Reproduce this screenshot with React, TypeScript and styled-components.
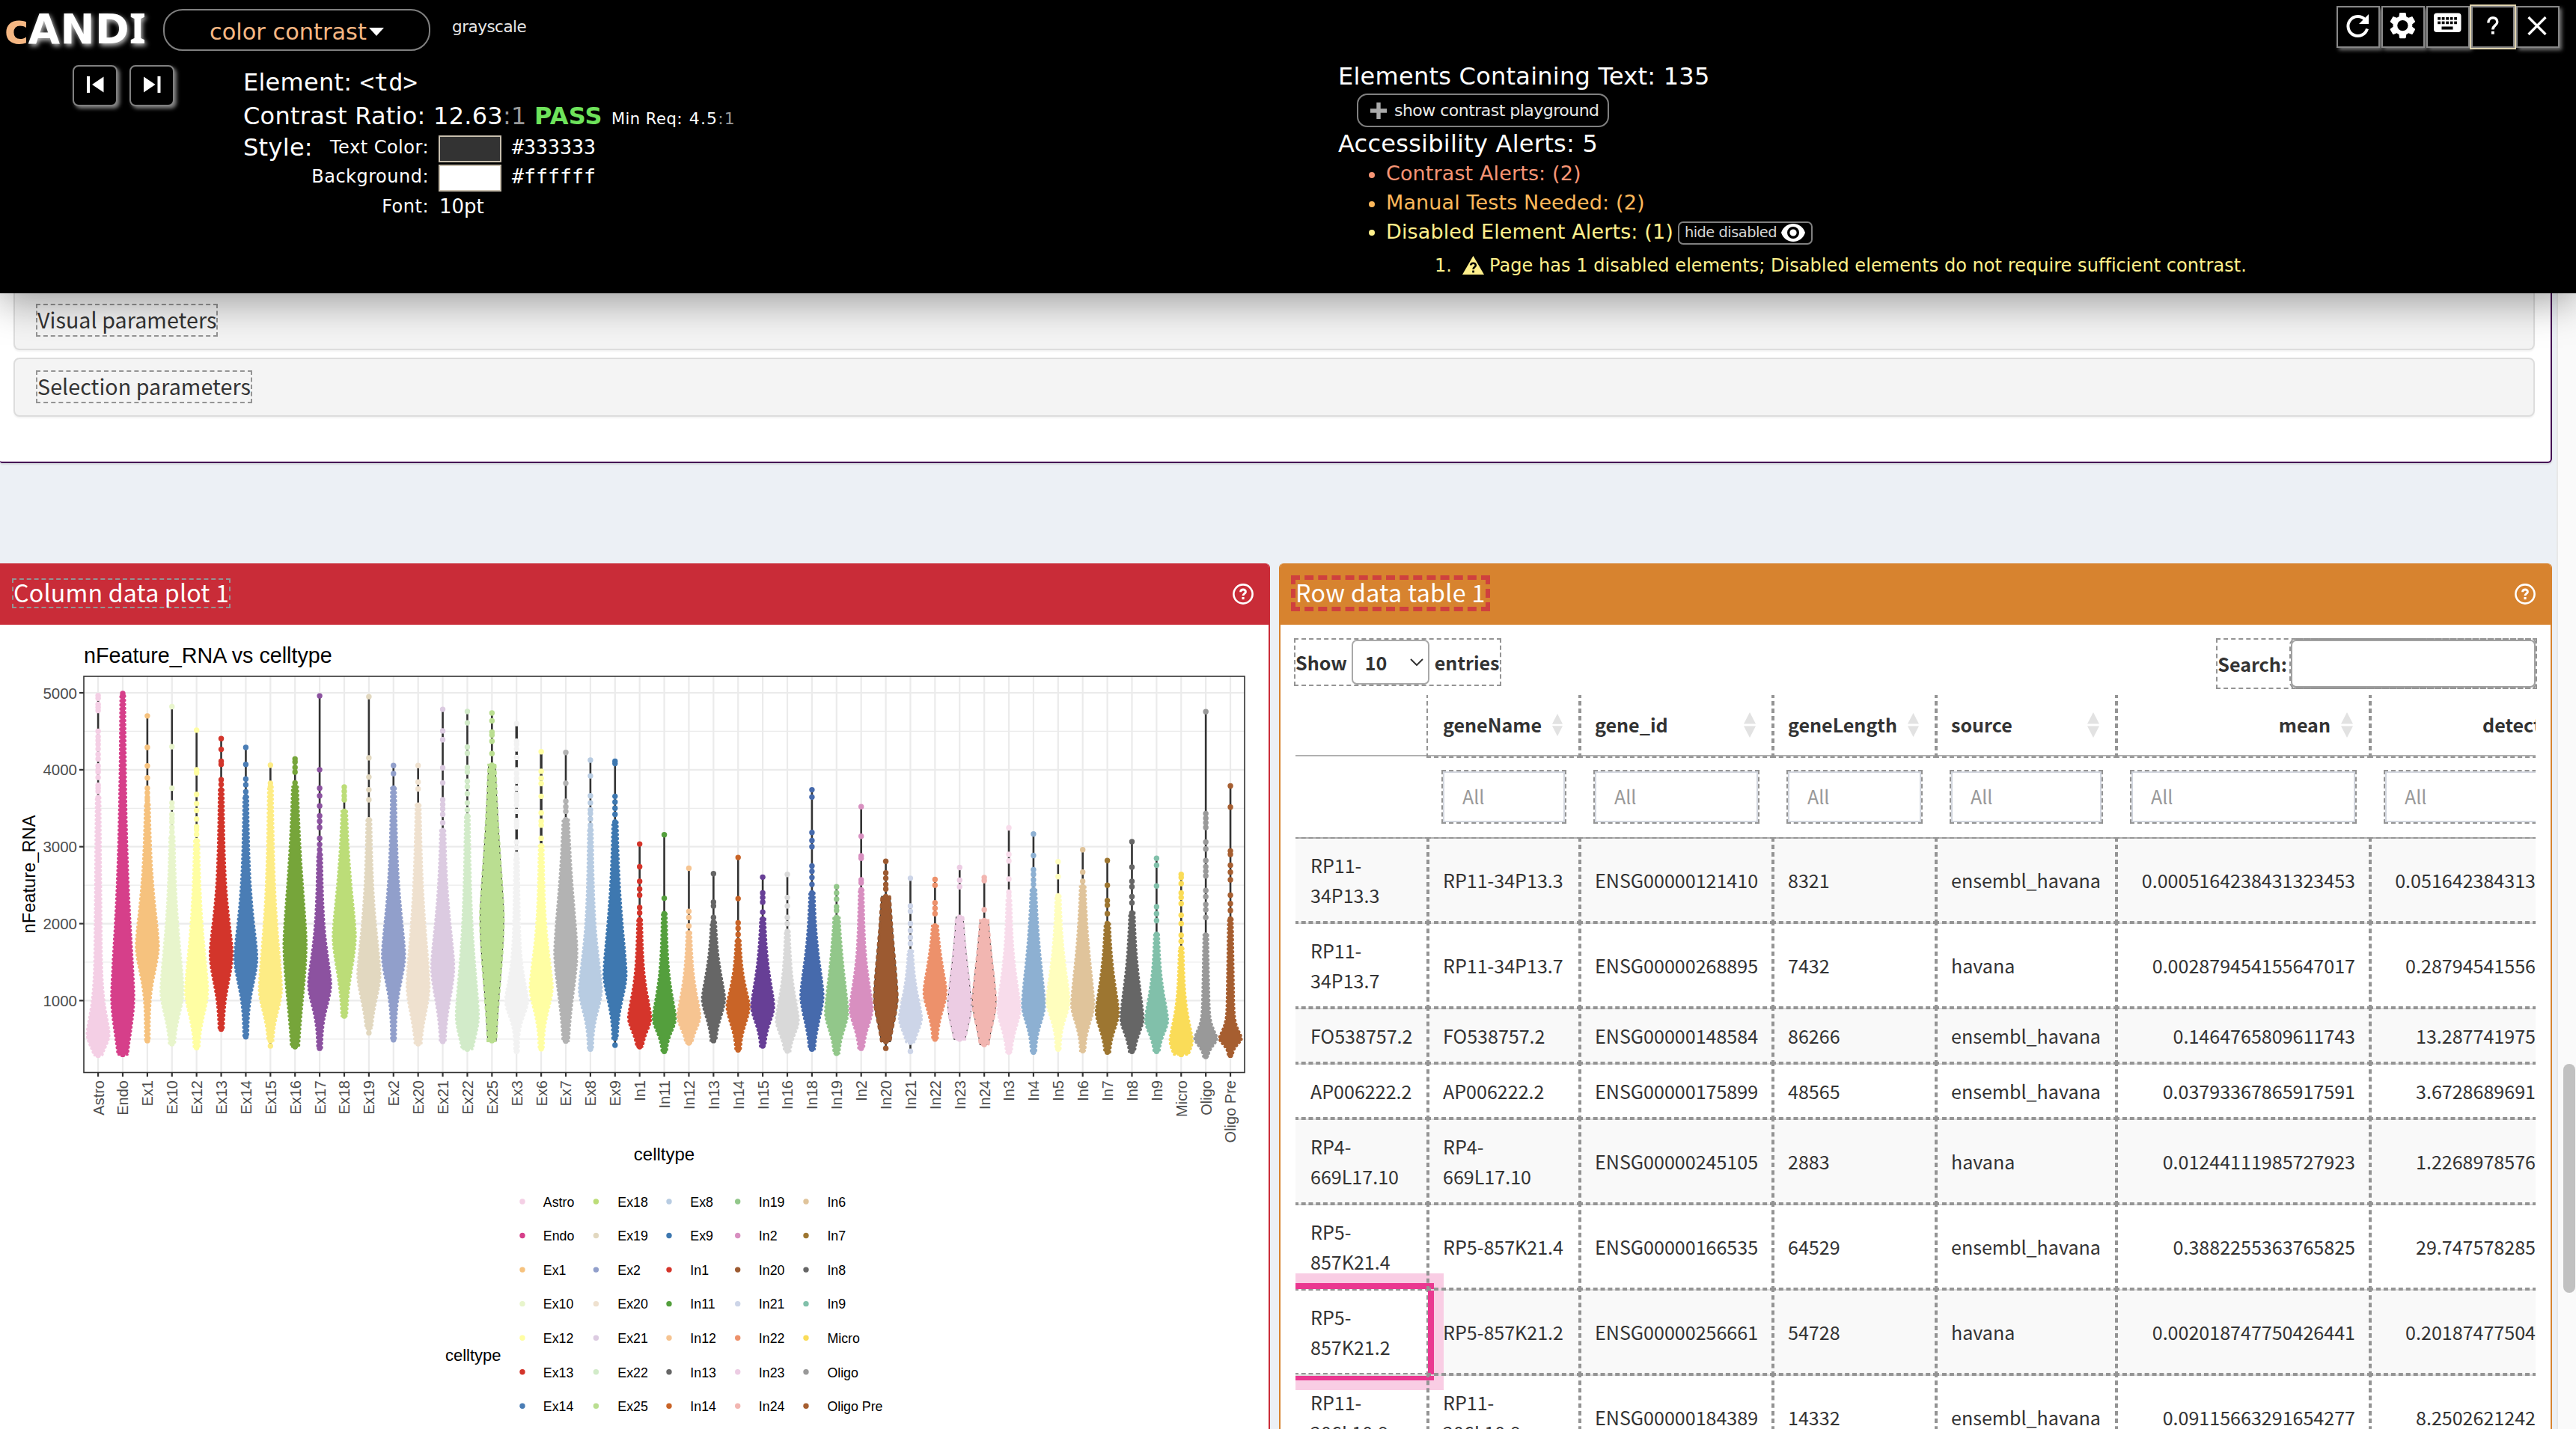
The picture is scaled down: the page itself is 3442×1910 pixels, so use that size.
import React from 'react';
import styled, { createGlobalStyle, css } from 'styled-components';

const verdana = `'DejaVu Sans', Verdana, sans-serif`;
const mono = `'DejaVu Sans Mono', monospace`;
const source = `'Noto Sans CJK SC', 'Noto Sans', sans-serif`;
const helvetica = `'Liberation Sans', Helvetica, Arial, sans-serif`;
const dashGray = '#949494';

const GlobalStyle = createGlobalStyle`
  *, *::before, *::after { box-sizing: border-box; }
  body { margin: 0; background: #ecf0f5; }
`;

const Page = styled.div`
  width: 3442px;
  height: 1910px;
  overflow: hidden;
  display: flex;
  flex-direction: column;
  background: #ecf0f5;
  font-family: ${source};
  color: #333;
`;

/* ---------- accessibility inspector bar ---------- */

const Inspector = styled.header`
  position: relative;
  z-index: 2;
  flex: none;
  height: 392px;
  background: #000;
  color: #fff;
  font-family: ${verdana};
  box-shadow: 0 12px 50px rgba(0, 0, 0, 0.36);
`;

const TopBar = styled.div`
  display: flex;
  height: 72px;
`;

const Logo = styled.div`
  width: 218px;
  padding: 3px 0 0 6px;
  font-size: 55px;
  font-weight: bold;
  line-height: 72px;
  white-space: nowrap;
`;

const LogoPrefix = styled.span`
  color: #f5b783;
  letter-spacing: -1px;
`;

const LogoName = styled.span`
  letter-spacing: 0.4px;
  text-shadow: 2px 3px 6px rgba(255, 255, 255, 0.75);
`;

const SerifCap = styled.span`
  font-family: 'Noto Sans', sans-serif;
  font-size: 56px;
  line-height: 0;
`;

const ModuleButton = styled.button`
  width: 357px;
  height: 56px;
  margin-top: 12px;
  padding: 5px 0 0 60px;
  display: flex;
  align-items: center;
  gap: 3px;
  border: 2px solid #808080;
  border-radius: 26px;
  background: #000;
  color: #f5b783;
  font: 30.4px/48px ${verdana};
  white-space: nowrap;
`;

const Grayscale = styled.span`
  margin-left: 29px;
  font-size: 21.5px;
  line-height: 72px;
  letter-spacing: -0.5px;
  color: #e8e8e8;
`;

const IconGroup = styled.div`
  display: flex;
  gap: 2px;
  margin: 8px 22px 0 auto;
`;

const IconButton = styled.button<{ $focused?: boolean }>`
  width: 58px;
  height: 56px;
  padding: 0;
  display: block;
  border: 2px solid #888;
  background: #000;
  box-shadow: 3px 3px 5px rgba(255, 255, 255, 0.45);
  ${p => p.$focused && css`
    position: relative;
    outline: 2px solid #dfd3ae;
    box-shadow: none;
  `}
  svg { display: block; }
`;

const InspectorBody = styled.div`
  display: flex;
  align-items: flex-start;
`;

const NavButtons = styled.div`
  display: flex;
  gap: 16px;
  width: 325px;
  padding: 15px 0 0 97px;
`;

const NavButton = styled.button`
  width: 60px;
  height: 55px;
  padding: 0;
  border: 2px solid #808080;
  border-radius: 8px;
  background: #000;
  box-shadow: 3px 3px 5px rgba(255, 255, 255, 0.5);
  svg { display: block; }
`;

const ElementInfo = styled.section`
  width: 1467px;
  padding-top: 15px;
`;

const InfoLine = styled.div<{ $h: number }>`
  height: ${p => p.$h}px;
  line-height: ${p => p.$h}px;
  font-size: 32px;
  letter-spacing: 0.25px;
  white-space: nowrap;
`;

const Code = styled.span`
  font-family: ${mono};
  letter-spacing: 0;
`;

const Muted = styled.span`
  color: #999;
`;

const Pass = styled.span`
  color: #6ee35b;
  font-weight: bold;
`;

const MinReq = styled.span`
  font-size: 21px;
  margin-left: 12px;
  letter-spacing: 0.5px;
`;

const MinReqValue = styled.span`
  font-size: 22px;
  letter-spacing: 1.1px;
`;

const StyleRow = styled.div`
  display: flex;
  height: 39.4px;
  line-height: 39px;
  white-space: nowrap;
`;

const StyleHead = styled.span`
  width: 92px;
  font-size: 32px;
  letter-spacing: 0.3px;
`;

const StyleLabel = styled.span`
  width: 156px;
  display: flex;
  justify-content: flex-end;
  font-size: 24px;
  letter-spacing: 0.5px;
`;

const Swatch = styled.span<{ $color: string }>`
  width: 84px;
  height: 36px;
  margin: 3px 14px 0 13px;
  border: 2px solid #c8bfae;
  background: ${p => p.$color};
`;

const HexValue = styled.span`
  font: 26.6px/38px ${mono};
`;

const FontValue = styled.span`
  margin-left: 14px;
  font-size: 26px;
`;

const Alerts = styled.section`
  padding-top: 10px;
`;

const AlertHeading = styled.div<{ $h: number }>`
  height: ${p => p.$h}px;
  line-height: ${p => p.$h}px;
  font-size: 32px;
  letter-spacing: 0.25px;
  margin-left: -4px;
`;

const PlaygroundButton = styled.button`
  display: flex;
  align-items: center;
  gap: 10px;
  width: 337px;
  height: 45px;
  margin: 3px 0 1px 21px;
  padding: 1px 0 0 16px;
  border: 2px solid #808080;
  border-radius: 14px;
  background: #000;
  color: #e8e8e8;
  font: 22px/40px ${verdana};
  letter-spacing: -0.52px;
  white-space: nowrap;
`;

const AlertList = styled.ul`
  margin: 0;
  padding: 0 0 0 37px;
  list-style: none;
`;

const AlertItem = styled.li<{ $color: string }>`
  display: flex;
  align-items: center;
  height: 38.8px;
  color: ${p => p.$color};
  font-size: 27px;
  line-height: 38px;
  letter-spacing: 0.12px;
  white-space: nowrap;
  &::before {
    content: '';
    width: 8px;
    height: 8px;
    margin: 3px 15px 0 0;
    border-radius: 50%;
    background: ${p => p.$color};
  }
`;

const HideButton = styled.button`
  display: flex;
  align-items: center;
  gap: 6px;
  width: 180px;
  height: 31px;
  margin: 3px 0 0 6px;
  padding: 0 0 0 7px;
  border: 2px solid #808080;
  border-radius: 7px;
  background: #000;
  color: #d6d6d6;
  font: 19.4px/26px ${verdana};
  letter-spacing: -0.5px;
  white-space: nowrap;
`;

const AlertDetail = styled.div`
  display: flex;
  align-items: center;
  height: 40px;
  margin: 6px 0 0 125px;
  color: #fff08c;
  font-size: 24px;
  line-height: 40px;
  letter-spacing: 0.05px;
  white-space: nowrap;
  svg { margin: 0 7px 8px 14px; align-self: flex-end; }
`;

/* ---------- application ---------- */

const Viewport = styled.div`
  flex: 1;
  display: flex;
  min-height: 0;
`;

const Content = styled.main`
  width: 3416px;
  display: flex;
  flex-direction: column;
`;

const ScrollTrack = styled.div`
  width: 26px;
  padding: 1030px 0 0 7px;
  border-left: 2px solid #e8e8e8;
  background: #fafafa;
`;

const ScrollThumb = styled.div`
  width: 16px;
  height: 306px;
  border-radius: 8px;
  background: #c1c1c1;
`;

const ParamBox = styled.section`
  flex: none;
  width: 3410px;
  height: 227px;
  padding: 0 21px 0 18px;
  border: solid #440154;
  border-width: 0 2px 2px 0;
  border-radius: 0 0 6px 3px;
  background: #fff;
  box-shadow: 0 2px 2px rgba(0, 0, 0, 0.1);
`;

const ParamPanel = styled.div<{ $cut?: boolean }>`
  height: ${p => (p.$cut ? 76 : 79)}px;
  margin-bottom: 10px;
  padding: ${p => (p.$cut ? 14 : 15)}px 0 0 28px;
  border: 2px solid #ddd;
  ${p => p.$cut && css`border-top: 0;`}
  border-radius: ${p => (p.$cut ? '0 0 8px 8px' : '8px')};
  background: #f4f4f4;
  box-shadow: 0 2px 2px rgba(0, 0, 0, 0.05);
`;

const ParamLabel = styled.span`
  display: inline-block;
  padding-bottom: 2px;
  border: 2px dashed ${dashGray};
  font-size: 28.65px;
  line-height: 38px;
  letter-spacing: 0.06px;
  vertical-align: top;
`;

const Boxes = styled.div`
  flex: 1;
  display: flex;
  gap: 12px;
  padding-top: 134px;
  min-height: 0;
`;

const Box = styled.section<{ $accent: string; $width: number; $first?: boolean }>`
  width: ${p => p.$width}px;
  display: flex;
  flex-direction: column;
  border: solid ${p => p.$accent};
  border-width: 0 2px 0 ${p => (p.$first ? 0 : 2)}px;
  border-radius: ${p => (p.$first ? '0 6px 0 0' : '6px 6px 0 0')};
  background: #fff;
  overflow: hidden;
`;

const BoxHeader = styled.div<{ $accent: string; $pad: string }>`
  flex: none;
  display: flex;
  justify-content: space-between;
  align-items: flex-start;
  height: 82px;
  padding: ${p => p.$pad};
  background: ${p => p.$accent};
`;

const BoxTitle = styled.span<{ $alert?: boolean }>`
  padding-bottom: 4px;
  border: ${p => (p.$alert ? '6px dashed #cf403e' : `2px dashed ${dashGray}`)};
  color: #fff;
  font-size: 32.2px;
  line-height: 32px;
  letter-spacing: ${p => (p.$alert ? 0.35 : 0.18)}px;
  white-space: nowrap;
`;

const HelpIcon = styled.svg<{ $top: number }>`
  margin-top: ${p => p.$top}px;
`;

const TableTools = styled.div`
  flex: none;
  display: flex;
  justify-content: space-between;
  align-items: flex-start;
  height: 94px;
  padding: 18px 18px 0;
  font-size: 25.07px;
  font-weight: bold;
`;

const LengthLabel = styled.label`
  display: flex;
  align-items: center;
  height: 64px;
  border: 2px dashed ${dashGray};
  line-height: 58px;
`;

const LabelText = styled.span`
  padding-bottom: 1px;
`;

const LengthSelect = styled.span`
  display: flex;
  align-items: center;
  justify-content: space-between;
  width: 104px;
  height: 60px;
  margin: 0 7px 0 6px;
  padding: 0 6px 1px 16px;
  border: 2px solid #a9a9a9;
  border-radius: 7px;
`;

const SearchLabel = styled.label`
  display: flex;
  align-items: center;
  height: 68px;
  border: 2px dashed ${dashGray};
`;

const SearchInput = styled.input`
  width: 327px;
  height: 64px;
  margin-left: 5px;
  border: 2px solid #a0a0a0;
  border-radius: 7px;
  outline: 2px dashed ${dashGray};
  background: #fff;
`;

const TableClip = styled.div`
  flex: 1;
  width: 1657px;
  margin-left: 20px;
  min-height: 0;
  overflow: hidden;
`;

const Table = styled.table`
  width: 1657px;
  table-layout: fixed;
  border-collapse: separate;
  border-spacing: 0;
  font-size: 25.07px;
  line-height: 40px;
`;

const HeadCell = styled.th<{ $blank?: boolean }>`
  height: 82px;
  padding: 0 20px;
  border-bottom: 2px solid #b0b0b0;
  ${p => !p.$blank && css`outline: 2px dashed ${dashGray};`}
  white-space: nowrap;
`;

const HeadInner = styled.div<{ $numeric?: boolean }>`
  display: flex;
  align-items: center;
  justify-content: ${p => (p.$numeric ? 'flex-end' : 'space-between')};
  gap: 14px;
  margin-right: 3px;
`;

const HeadText = styled.span`
  padding-bottom: 3px;
`;

const CutHead = styled.div`
  padding: 0 0 3px 130px;
  text-align: left;
`;

const FilterCell = styled.td`
  height: 110px;
  padding: 20px;
  border-bottom: 2px solid #b0b0b0;
`;

const FilterInput = styled.input<{ $cut?: boolean }>`
  display: block;
  width: ${p => (p.$cut ? '260px' : '100%')};
  height: 68px;
  padding: 0 0 2px 24px;
  border: 2px solid #d2d6de;
  border-radius: 0;
  outline: 2px dashed ${dashGray};
  font: 25.07px ${source};
  &::placeholder { color: #999; opacity: 1; }
`;

const BodyRow = styled.tr`
  &:nth-child(odd) { background: #f9f9f9; }
`;

const Cell = styled.td<{ $first?: boolean; $numeric?: boolean; $active?: boolean; $cut?: boolean }>`
  padding: ${p => (p.$cut ? '15px 0 17px 20px' : '15px 20px 17px')};
  border-top: ${p => (p.$first ? '0' : '2px solid #ddd')};
  outline: 2px dashed ${dashGray};
  text-align: ${p => (p.$numeric ? 'right' : 'left')};
  vertical-align: middle;
  white-space: pre-line;
  ${p => p.$numeric && css`white-space: nowrap;`}
  ${p => p.$active && css`
    background: #fff;
    outline: none;
    border-top-color: transparent;
    box-shadow: 0 0 0 8px #ea3790, 0 0 0 21px #f9cde4;
  `}
`;

const ChartSvg = styled.svg`
  display: block;
  font-family: ${helvetica};
`;

/* ---------- violin data ---------- */

type Violin = {
  name: string;
  color: string;
  dots: number[];
  col: number;
  peak: number;
  low: number;
  up: number;
  down: number;
};

const v = (
  name: string, color: string, dots: number[], col: number,
  peak: number, low: number, up: number, down: number,
): Violin => ({ name, color, dots, col, peak, low, up, down });

const violins: Violin[] = [
  v('Astro', '#f4cfe5', [4965, 4930, 4850, 4810, 4770, 4500, 4430, 4380, 4330, 4270, 4200, 4140, 4050, 4000, 3970, 3900, 3800, 3760, 3720], 3640, 560, 290, 400, 220),
  v('Endo', '#d63f8a', [4990], 4960, 1050, 300, 1350, 700),
  v('Ex1', '#f6c27e', [4700, 4290, 4050, 3895, 3760, 3700, 3640, 3600], 3550, 1720, 480, 750, 480),
  v('Ex10', '#e8f5cc', [4820, 4300, 3760, 3570, 3510, 3420, 3370, 3320, 3250, 3190], 3130, 1130, 440, 900, 430),
  v('Ex12', '#fffea3', [4515, 4000, 3960, 3680, 3560, 3470, 3360, 3260, 3220, 3160], 3080, 1130, 390, 850, 430),
  v('Ex13', '#d3352b', [4405, 4265, 4110, 4070, 3870, 3810], 3740, 1620, 630, 650, 520),
  v('Ex14', '#4a7db5', [4290, 4070, 3880, 3805, 3715], 3650, 1560, 530, 700, 480),
  v('Ex15', '#fdec85', [4060, 3825, 410], 3780, 1150, 480, 950, 400),
  v('Ex16', '#76a53a', [4140, 4100, 4030, 3970, 3830], 3780, 1750, 400, 1150, 1050),
  v('Ex17', '#8c52a0', [4960, 4000, 3760, 3660, 3530, 3400, 3330, 3250, 3110, 3030, 2960], 2900, 1220, 380, 560, 400),
  v('Ex18', '#bcdd78', [3775, 3720, 3660, 3610], 3460, 1850, 800, 850, 620),
  v('Ex19', '#e2d8c0', [4950, 4155, 3905, 3740, 3610, 580], 3350, 1350, 640, 780, 470),
  v('Ex2', '#919fcb', [4055, 3950], 3760, 1600, 490, 800, 500),
  v('Ex20', '#efe1cf', [4055, 3840, 3750], 3540, 1200, 440, 1000, 520),
  v('Ex21', '#dccbe1', [4785, 4505, 4390, 4025, 3830, 3610, 3550, 3490, 3420, 3310], 3210, 1450, 470, 800, 580),
  v('Ex22', '#d2ebc9', [4757, 4610, 4295, 4215, 4030, 3970, 3850, 3780, 3690, 3570, 3480], 3400, 800, 370, 950, 420),
  v('Ex25', '#bade91', [4738, 4635, 4490, 4450, 4370, 4210], 4060, 2100, 480, 1250, 1250),
  v('Ex3', '#f2f2f2', [4600, 4370, 4330, 4270, 4160, 4000, 3950, 3890, 3850, 3760, 3680, 3640, 3600, 3540, 3460, 3340, 3300, 3260, 3060, 2990, 2900], 2850, 1000, 340, 400, 270),
  v('Ex6', '#fffea3', [4235, 3980, 3890, 3820, 3655, 3440, 3330, 3280, 3110], 3010, 1180, 375, 620, 400),
  v('Ex7', '#b3b3b3', [4225, 3825, 3590, 3520, 3460], 3350, 1650, 475, 1050, 780),
  v('Ex8', '#b8cce2', [4125, 3920, 3660, 3570, 3480, 3430, 3360, 3280], 3220, 1150, 370, 650, 390),
  v('Ex9', '#3e78b0', [4110, 4080, 3655, 3580, 3500, 3420, 420], 3320, 1350, 510, 900, 450),
  v('In1', '#d5352b', [3035, 2740, 2550, 2450, 2370, 2210, 2140], 2050, 780, 400, 420, 250),
  v('In11', '#549f3d', [3155, 2330], 2130, 770, 340, 450, 240),
  v('In12', '#f6c491', [2720, 2160, 2080, 1970], 1880, 800, 450, 420, 240),
  v('In13', '#666666', [2650, 2280, 2230, 2080], 2020, 1030, 480, 450, 330),
  v('In14', '#c96427', [2860, 2325, 2010, 1940, 1860], 1780, 930, 360, 350, 320),
  v('In15', '#673f96', [2605, 2400, 2340, 2280, 2150], 2060, 930, 410, 500, 290),
  v('In16', '#d9d9d9', [2640, 2340, 2230, 2080, 2000], 1900, 750, 345, 450, 260),
  v('In18', '#466aac', [3740, 3645, 3185, 3080, 3000, 2750, 2680, 2600, 2510], 2400, 1080, 370, 600, 450),
  v('In19', '#92c78a', [2480, 2400, 2320, 2220, 2170], 2080, 850, 315, 750, 320),
  v('In2', '#d88fc0', [3520, 3135, 2880, 2850, 2570, 2530], 2440, 900, 380, 500, 310),
  v('In20', '#9c5a31', [2810, 2660, 2590, 2510, 2450, 380], 2350, 1050, 470, 1050, 480),
  v('In21', '#cdd5e8', [2590, 2230, 2160, 2000, 1910, 1820, 1740, 340], 1640, 780, 460, 400, 260),
  v('In22', '#ed916b', [2575, 2500, 2270, 2200, 2130], 1970, 1120, 500, 500, 350),
  v('In23', '#eccce3', [2730, 2565, 2480], 2080, 950, 500, 750, 430),
  v('In24', '#f2b6b1', [2600, 2560, 2180], 2040, 1000, 430, 800, 450),
  v('In3', '#f8dceb', [3245, 2900, 2815, 2580, 2410, 2360], 2300, 900, 330, 550, 340),
  v('In4', '#8db0d2', [3165, 2885, 2700, 2640, 2570, 2510], 2440, 950, 330, 800, 330),
  v('In5', '#fffebe', [2805, 2610], 2360, 1000, 370, 600, 310),
  v('In6', '#e0c49b', [2960, 2670, 2550], 2480, 950, 350, 800, 320),
  v('In7', '#9d7631', [2820, 2500, 2300, 2240, 2130], 2000, 850, 330, 550, 310),
  v('In8', '#666666', [3065, 2735, 2550, 2480, 2350, 2270], 2140, 770, 340, 650, 270),
  v('In9', '#81c0aa', [2850, 2760, 2490, 2220, 2130, 2040], 1860, 750, 340, 450, 250),
  v('Micro', '#fadc58', [2640, 2600, 2520, 2400, 2340, 2260, 2110, 2000, 1850, 1770], 1680, 480, 300, 380, 240),
  v('Oligo', '#999999', [4755, 3430, 3370, 3310, 3250, 3060, 2970, 2820, 2740, 2680, 2620, 2430, 2350, 2250, 2180, 2080], 1850, 510, 275, 160, 130),
  v('Oligo Pre', '#a65e30', [3790, 3515, 2945, 2900, 2760, 2670, 2570, 2370, 2260, 2170], 2060, 510, 290, 150, 110),
];

/* Sparse categories, where the violin's dark edge shows between the points. */
const sparse = new Set(['In20', 'In23', 'In24', 'Ex25']);

/* The chart's own coordinates start at the box body, 835px below the page top. */
const TOP = 835;
const yOf = (value: number) => 926 - TOP + (5000 - value) * 0.10285;
const xOf = (i: number) => 131.1 + i * 32.89;
const NECK = 3.8;
const HALF = 16.2;

const halfWidth = (d: Violin, value: number) => {
  const above = value > d.peak;
  const t = Math.abs(value - d.peak) / (above ? d.up : d.down);
  const bell = Math.exp(-Math.pow(t, above ? 1.5 : 1.9));
  const taper = above ? Math.max(0, 1 - (value - d.peak) / (d.col - d.peak)) : bell;
  return NECK + (HALF - NECK) * (0.78 * bell + 0.22 * taper);
};

const outline = (d: Violin, cx: number) => {
  const n = 60;
  const right: string[] = [];
  const left: string[] = [];
  for (let k = 0; k <= n; k++) {
    const value = d.col - ((d.col - d.low) * k) / n;
    const w = halfWidth(d, value) - 1;
    right.push(`${(cx + w).toFixed(1)} ${yOf(value).toFixed(1)}`);
    left.unshift(`${(cx - w).toFixed(1)} ${yOf(value).toFixed(1)}`);
  }
  return `M${right.concat(left).join('L')}Z`;
};

const legendColumns = [
  { dot: 698, text: 726, from: 0 },
  { dot: 796.4, text: 825.5, from: 10 },
  { dot: 894, text: 922.5, from: 20 },
  { dot: 985.7, text: 1014, from: 30 },
  { dot: 1077, text: 1105.6, from: 40 },
];

const ViolinChart = () => (
  <ChartSvg width="1694" height="1075" viewBox="0 0 1694 1075">
    <text x="112" y={886 - TOP} fontSize="28.7">nFeature_RNA vs celltype</text>
    {[500, 1500, 2500, 3500, 4500].map(t => (
      <path key={t} d={`M112 ${yOf(t)}H1663`} stroke="#ebebeb" strokeWidth="1.2" />
    ))}
    {[1000, 2000, 3000, 4000, 5000].map(t => (
      <g key={t}>
        <path d={`M112 ${yOf(t)}H1663`} stroke="#ebebeb" strokeWidth="2.2" />
        <path d={`M106 ${yOf(t)}H112`} stroke="#333" strokeWidth="2.2" />
        <text x="103" y={yOf(t) + 7.5} fontSize="20.5" textAnchor="end" fill="#4d4d4d">{t}</text>
      </g>
    ))}
    {violins.map((d, i) => (
      <path key={d.name} d={`M${xOf(i)} 69V598`} stroke="#ebebeb" strokeWidth="2.2" />
    ))}
    {violins.map((d, i) => (
      <g key={d.name}>
        <path d={`M${xOf(i)} ${yOf(d.dots[0])}V${yOf(Math.min(d.low, ...d.dots))}`} stroke="#333" strokeWidth={d.name === 'Ex3' || d.name === 'Ex6' ? 3.4 : 2.6} />
        {sparse.has(d.name) && <path d={outline(d, xOf(i))} fill="none" stroke="#333" strokeWidth="2" />}
        <path d={outline(d, xOf(i))} fill={d.color} />
        <path d={outline(d, xOf(i))} fill="none" stroke={d.color} strokeWidth={sparse.has(d.name) ? 4 : 3.2} strokeLinecap="round" strokeDasharray={sparse.has(d.name) ? '3 5.6' : '1 4.4'} />
        {[...d.dots, d.col, d.low].map((p, k) => (
          <circle key={k} cx={xOf(i)} cy={yOf(p)} r="3.7" fill={d.color} />
        ))}
        <path d={`M${xOf(i)} 598v6`} stroke="#333" strokeWidth="2.2" />
        <text transform={`translate(${xOf(i) + 7.4} 609) rotate(-90)`} fontSize="20" textAnchor="end" fill="#4d4d4d">{d.name}</text>
      </g>
    ))}
    <rect x="112" y="69" width="1551" height="529.5" fill="none" stroke="#333" strokeWidth="1.6" />
    <text transform={`translate(46.8 ${1168.5 - TOP}) rotate(-90)`} fontSize="23.7" textAnchor="middle">nFeature_RNA</text>
    <text x="887.5" y={1551 - TOP} fontSize="24" textAnchor="middle">celltype</text>
    <text x="595" y={1819 - TOP} fontSize="22">celltype</text>
    {legendColumns.map(c =>
      violins.slice(c.from, c.from + 7).map((d, r) => (
        <g key={d.name}>
          <circle cx={c.dot} cy={1606 - TOP + r * 45.55} r="3.7" fill={d.color} />
          <text x={c.text - 0.2} y={1612.8 - TOP + r * 45.55} fontSize="17.8">{d.name}</text>
        </g>
      )),
    )}
  </ChartSvg>
);

/* ---------- table data ---------- */

const columnWidths = [177, 203, 258, 218, 241, 339, 221];

const rows = [
  ['RP11-\n34P13.3', 'RP11-34P13.3', 'ENSG00000121410', '8321', 'ensembl_havana', '0.0005164238431323453', '0.051642384313'],
  ['RP11-\n34P13.7', 'RP11-34P13.7', 'ENSG00000268895', '7432', 'havana', '0.002879454155647017', '0.28794541556'],
  ['FO538757.2', 'FO538757.2', 'ENSG00000148584', '86266', 'ensembl_havana', '0.1464765809611743', '13.287741975'],
  ['AP006222.2', 'AP006222.2', 'ENSG00000175899', '48565', 'ensembl_havana', '0.03793367865917591', '3.6728689691'],
  ['RP4-\n669L17.10', 'RP4-\n669L17.10', 'ENSG00000245105', '2883', 'havana', '0.01244111985727923', '1.2268978576'],
  ['RP5-\n857K21.4', 'RP5-857K21.4', 'ENSG00000166535', '64529', 'ensembl_havana', '0.3882255363765825', '29.747578285'],
  ['RP5-\n857K21.2', 'RP5-857K21.2', 'ENSG00000256661', '54728', 'havana', '0.002018747750426441', '0.20187477504'],
  ['RP11-\n206L10.9', 'RP11-\n206L10.9', 'ENSG00000184389', '14332', 'ensembl_havana', '0.09115663291654277', '8.2502621242'],
];

const SortIcon = () => (
  <svg width="16" height="34" viewBox="0 0 16 34" fill="#e2e2e2">
    <path d="M8 0L16 15.5H0ZM8 34L16 18.5H0Z" />
  </svg>
);

const Help = ({ top }: { top: number }) => (
  <HelpIcon $top={top} width="28" height="28" viewBox="0 0 28 28" fill="none" stroke="#fff">
    <circle cx="14" cy="14" r="12.6" strokeWidth="2.6" />
    <path d="M10.6 11.2C10.8 6.9 17.6 7 17.4 11.1C17.3 13.4 14 13.4 14 16.2" strokeWidth="3" />
    <path d="M14 18v3.2" strokeWidth="3.2" />
  </HelpIcon>
);

const red = '#c92c38';
const orange = '#d7832f';

export default function App() {
  return (
    <Page>
      <GlobalStyle />
      <Inspector>
        <TopBar>
          <Logo>
            <LogoPrefix>c</LogoPrefix>
            <LogoName>AND<SerifCap>I</SerifCap></LogoName>
          </Logo>
          <ModuleButton>
            color contrast
            <svg width="20" height="11" viewBox="0 0 20 11"><path d="M0 0H20L10 11Z" fill="#fff" /></svg>
          </ModuleButton>
          <Grayscale>grayscale</Grayscale>
          <IconGroup>
            <IconButton aria-label="relaunch">
              <svg width="54" height="52" viewBox="0 0 54 52">
                <path d="M36.2 16.4A13 13 0 1 0 39 28.5" fill="none" stroke="#fff" strokeWidth="4" />
                <path d="M41 9V22H28Z" fill="#fff" />
              </svg>
            </IconButton>
            <IconButton aria-label="settings">
              <svg width="54" height="52" viewBox="0 0 54 52">
                <g transform="translate(4.9 2.6) scale(1.79)">
                  <path fill="#fff" d="M19.14 12.94c.04-.3.06-.61.06-.94 0-.32-.02-.64-.07-.94l2.03-1.58c.18-.14.23-.41.12-.61l-1.92-3.32c-.12-.22-.37-.29-.59-.22l-2.39.96c-.5-.38-1.03-.7-1.62-.94L14.4 2.81c-.04-.24-.24-.41-.48-.41h-3.84c-.24 0-.43.17-.47.41l-.36 2.54c-.59.24-1.13.57-1.62.94l-2.39-.96c-.22-.08-.47 0-.59.22L2.74 8.87c-.12.21-.08.47.12.61l2.03 1.58c-.05.3-.09.63-.09.94s.02.64.07.94l-2.03 1.58c-.18.14-.23.41-.12.61l1.92 3.32c.12.22.37.29.59.22l2.39-.96c.5.38 1.03.7 1.62.94l.36 2.54c.05.24.24.41.48.41h3.84c.24 0 .44-.17.47-.41l.36-2.54c.59-.24 1.13-.56 1.62-.94l2.39.96c.22.08.47 0 .59-.22l1.92-3.32c.12-.22.07-.47-.12-.61l-2.01-1.58zM12 16a4 4 0 1 1 0-8 4 4 0 0 1 0 8z" />
                </g>
              </svg>
            </IconButton>
            <IconButton aria-label="keyboard shortcuts">
              <svg width="54" height="52" viewBox="0 0 54 52">
                <rect x="8" y="7.5" width="36.5" height="25.5" rx="4" fill="#fff" />
                {[0, 1, 2, 3, 4].map(i => (
                  <g key={i}>
                    <rect x={13.2 + i * 5.5} y="13" width="3.8" height="3.6" />
                    <rect x={13.2 + i * 5.5} y="18.6" width="3.8" height="3.6" />
                  </g>
                ))}
                <rect x="18.5" y="25.5" width="15" height="4" />
              </svg>
            </IconButton>
            <IconButton $focused aria-label="help">
              <svg width="54" height="52" viewBox="0 0 54 52">
                <path d="M20.8 20.5C21 11.5 33 11.8 32.8 19.5C32.6 24 26.8 24 26.8 29.5" fill="none" stroke="#fff" strokeWidth="3.4" />
                <rect x="24.9" y="31.8" width="3.9" height="3.9" fill="#fff" />
              </svg>
            </IconButton>
            <IconButton aria-label="close">
              <svg width="54" height="52" viewBox="0 0 54 52">
                <path d="M14.5 13L37.5 36M37.5 13L14.5 36" stroke="#fff" strokeWidth="3.2" />
              </svg>
            </IconButton>
          </IconGroup>
        </TopBar>
        <InspectorBody>
          <NavButtons>
            <NavButton aria-label="previous element">
              <svg width="56" height="51" viewBox="0 0 56 51" fill="#fff">
                <path d="M17 13h4v22h-4zM39.5 13.5v21L24 24z" />
              </svg>
            </NavButton>
            <NavButton aria-label="next element">
              <svg width="56" height="51" viewBox="0 0 56 51" fill="#fff">
                <path d="M35.5 13h4v22h-4zM17 13.5v21L32.5 24z" />
              </svg>
            </NavButton>
          </NavButtons>
          <ElementInfo>
            <InfoLine $h={46}>Element: <Code>&lt;td&gt;</Code></InfoLine>
            <InfoLine $h={45}>
              Contrast Ratio: 12.63<Muted>:1</Muted> <Pass>PASS</Pass>
              <MinReq>Min Req</MinReq>
              <MinReqValue>: 4.5<Muted>:1</Muted></MinReqValue>
            </InfoLine>
            <StyleRow>
              <StyleHead>Style:</StyleHead>
              <StyleLabel>Text Color:</StyleLabel>
              <Swatch $color="#333333" />
              <HexValue>#333333</HexValue>
            </StyleRow>
            <StyleRow>
              <StyleHead />
              <StyleLabel>Background:</StyleLabel>
              <Swatch $color="#ffffff" />
              <HexValue>#ffffff</HexValue>
            </StyleRow>
            <StyleRow>
              <StyleHead />
              <StyleLabel>Font:</StyleLabel>
              <FontValue>10pt</FontValue>
            </StyleRow>
          </ElementInfo>
          <Alerts>
            <AlertHeading $h={40}>Elements Containing Text: 135</AlertHeading>
            <PlaygroundButton>
              <svg width="22" height="22" viewBox="0 0 22 22"><path d="M8.3 0h5.4v8.3H22v5.4h-8.3V22H8.3v-8.3H0V8.3h8.3z" fill="#aaa" /></svg>
              show contrast playground
            </PlaygroundButton>
            <AlertHeading $h={42}>Accessibility Alerts: 5</AlertHeading>
            <AlertList>
              <AlertItem $color="#f79474">Contrast Alerts: (2)</AlertItem>
              <AlertItem $color="#fdb85b">Manual Tests Needed: (2)</AlertItem>
              <AlertItem $color="#fff08c">
                Disabled Element Alerts: (1)
                <HideButton>
                  hide disabled
                  <svg width="32" height="24" viewBox="0 0 32 24">
                    <path d="M0 12C5-4 27-4 32 12C27 28 5 28 0 12Z" fill="#fff" />
                    <circle cx="16" cy="12" r="6.3" fill="#fff" stroke="#000" strokeWidth="3.4" />
                  </svg>
                </HideButton>
              </AlertItem>
            </AlertList>
            <AlertDetail>
              1.
              <svg width="29" height="25" viewBox="0 0 29 25">
                <path d="M14.5 0L29 25H0Z" fill="#fff08c" />
                <path d="M11.2 12.6C11.2 8.6 18 8.9 17.8 12.6C17.6 15.3 14.6 14.9 14.6 18" fill="none" stroke="#000" strokeWidth="2.6" />
                <rect x="13.2" y="19.6" width="2.8" height="2.8" />
              </svg>
              Page has 1 disabled elements; Disabled elements do not require sufficient contrast.
            </AlertDetail>
          </Alerts>
        </InspectorBody>
      </Inspector>

      <Viewport>
        <Content>
          <ParamBox>
            <ParamPanel $cut><ParamLabel>Visual parameters</ParamLabel></ParamPanel>
            <ParamPanel><ParamLabel>Selection parameters</ParamLabel></ParamPanel>
          </ParamBox>
          <Boxes>
            <Box $accent={red} $width={1697} $first>
              <BoxHeader $accent={red} $pad="20px 20px 0 16px">
                <BoxTitle>Column data plot 1</BoxTitle>
                <Help top={7} />
              </BoxHeader>
              <ViolinChart />
            </Box>
            <Box $accent={orange} $width={1701}>
              <BoxHeader $accent={orange} $pad="16px 20px 0 14px">
                <BoxTitle $alert>Row data table 1</BoxTitle>
                <Help top={11} />
              </BoxHeader>
              <TableTools>
                <LengthLabel>
                  <LabelText>Show</LabelText>
                  <LengthSelect>
                    10
                    <svg width="18" height="10" viewBox="0 0 18 10"><path d="M1 1L9 9L17 1" fill="none" stroke="#333" strokeWidth="2" /></svg>
                  </LengthSelect>
                  <LabelText>entries</LabelText>
                </LengthLabel>
                <SearchLabel>
                  <LabelText>Search:</LabelText>
                  <SearchInput />
                </SearchLabel>
              </TableTools>
              <TableClip>
                <Table>
                  <colgroup>
                    {columnWidths.map((w, i) => <col key={i} style={{ width: w }} />)}
                  </colgroup>
                  <thead>
                    <tr>
                      <HeadCell $blank />
                      {['geneName', 'gene_id', 'geneLength', 'source'].map(h => (
                        <HeadCell key={h}><HeadInner><HeadText>{h}</HeadText><SortIcon /></HeadInner></HeadCell>
                      ))}
                      <HeadCell><HeadInner $numeric><HeadText>mean</HeadText><SortIcon /></HeadInner></HeadCell>
                      <HeadCell><CutHead>detected</CutHead></HeadCell>
                    </tr>
                    <tr>
                      <FilterCell />
                      {[1, 2, 3, 4, 5, 6].map(i => (
                        <FilterCell key={i}><FilterInput placeholder="All" $cut={i === 6} /></FilterCell>
                      ))}
                    </tr>
                  </thead>
                  <tbody>
                    {rows.map((row, r) => (
                      <BodyRow key={r}>
                        {row.map((text, c) => (
                          <Cell key={c} $first={r === 0} $numeric={c > 4} $cut={c === 6} $active={r === 6 && c === 0}>
                            {text}
                          </Cell>
                        ))}
                      </BodyRow>
                    ))}
                  </tbody>
                </Table>
              </TableClip>
            </Box>
          </Boxes>
        </Content>
        <ScrollTrack><ScrollThumb /></ScrollTrack>
      </Viewport>
    </Page>
  );
}
